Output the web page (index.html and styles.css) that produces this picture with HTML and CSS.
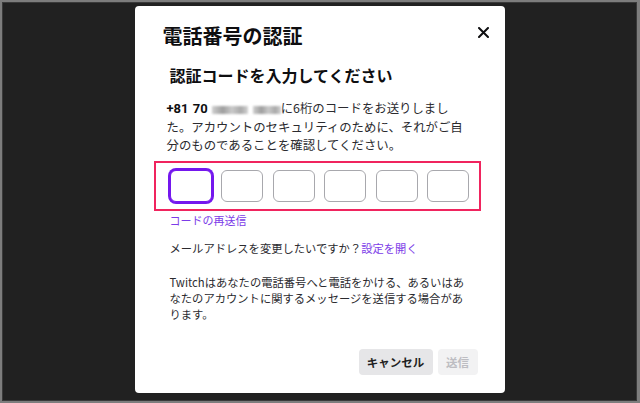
FILE: index.html
```html
<!DOCTYPE html>
<html lang="ja">
<head>
    <meta charset="UTF-8">
    <meta name="viewport" content="width=device-width, initial-scale=1.0">
    <title>電話番号の認証</title>
    <link rel="stylesheet" href="styles.css">
</head>
<body>
    <div class="screen">
        <div class="modal">
            <button class="close" aria-label="閉じる">
                <svg width="11" height="11" viewBox="0 0 11 11"><path d="M1 1L10 10M10 1L1 10" stroke="#0e0e10" stroke-width="2" stroke-linecap="round"/></svg>
            </button>
            <h2 class="title">電話番号の認証</h2>
            <div class="content">
                <h3 class="subtitle">認証コードを入力してください</h3>
                <p class="lead"><b class="num">+81 70</b><span class="blur w1"></span><span class="blur w2"></span>に6桁のコードをお送りしました。アカウントのセキュリティのために、それがご自分のものであることを確認してください。</p>
                <div class="code-row">
                    <input class="digit focused" maxlength="1">
                    <input class="digit" maxlength="1">
                    <input class="digit" maxlength="1">
                    <input class="digit" maxlength="1">
                    <input class="digit" maxlength="1">
                    <input class="digit" maxlength="1">
                </div>
                <a class="link resend" href="#">コードの再送信</a>
                <p class="small">メールアドレスを変更したいですか？<a class="link" href="#">設定を開く</a></p>
                <p class="small notice">Twitchはあなたの電話番号へと電話をかける、あるいはあなたのアカウントに関するメッセージを送信する場合があります。</p>
            </div>
            <div class="actions">
                <button class="btn cancel">キャンセル</button>
                <button class="btn send" disabled>送信</button>
            </div>
        </div>
    </div>
</body>
</html>
```

FILE: styles.css
```css
* { box-sizing: border-box; }
body { margin: 0; background: #7d7d7d; font-family: "Noto Sans CJK JP", "Noto Sans", sans-serif; color: #1f1f23; }
.screen { margin: 2px 3px 2px 2px; height: 399px; background: #212121; padding-top: 4px; box-shadow: inset 0 0 0 1px #3a3a3a; }
.modal { position: relative; width: 370px; height: 387px; margin: 0 auto; background: #fff; border-radius: 4px; padding: 17px 27px 18px 28px; display: flex; flex-direction: column; }
.close { position: absolute; top: 21px; right: 16px; border: none; background: none; padding: 0; width: 11px; height: 11px; display: flex; }
.title { margin: 0; font-size: 20px; line-height: 26px; font-weight: 700; color: #0e0e10; }
.content { padding: 0 8px 0 7px; }
.subtitle { margin: 15px 0 0; font-size: 16px; line-height: 22px; font-weight: 700; color: #0e0e10; }
.lead { margin: 13px 2px 0 -3px; font-size: 12.4px; line-height: 18px; color: #2b2b2f; }
.num { font-family: Roboto, "Noto Sans", sans-serif; font-weight: 700; font-size: 13px; color: #0e0e10; word-spacing: 1px; margin-right: 4px; }
.blur { display: inline-block; height: 8px; vertical-align: -1px; background: linear-gradient(90deg, #cfcfcf, #9e9e9e 30%, #c9c9c9 55%, #a9a9a9 80%, #d2d2d2); filter: blur(1.2px); }
.w1 { width: 36px; margin-right: 5px; }
.w2 { width: 28px; }
.code-row { display: flex; gap: 9.6px; margin: 7px -11px 0 -16px; padding: 7px 9px 7px 14px; border: 2px solid #f0245e; }
.digit { width: 42px; height: 32px; border: 1px solid #a8a8ad; border-radius: 6px; background: #fff; padding: 0; outline: none; }
.digit.focused { border-color: #7417ee; box-shadow: 0 0 0 2px #7417ee; }
.link { color: #7c3ce8; text-decoration: none; }
.resend { display: block; margin-top: 1px; font-size: 11px; line-height: 16px; }
.small { margin: 12px 0 0; font-size: 11.3px; line-height: 16px; color: #2b2b2f; }
.notice { margin-top: 18px; }
.actions { margin-top: auto; display: flex; justify-content: flex-end; gap: 5px; }
.btn { height: 26px; border: none; border-radius: 4px; font-family: "Noto Sans CJK JP", sans-serif; font-weight: 700; font-size: 11.5px; padding: 0; white-space: nowrap; }
.cancel { width: 74px; background: #e6e6e8; color: #1f1f23; }
.send { width: 40px; background: #f2f2f3; color: #bdbdc2; }
```
